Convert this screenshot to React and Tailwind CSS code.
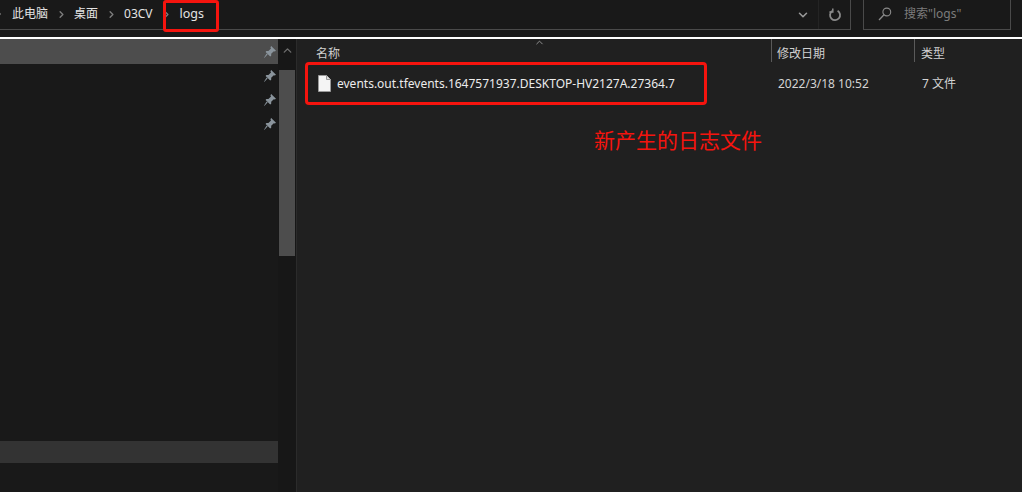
import React from "react";
import { ChevronRight, ChevronDown, ChevronUp } from "lucide-react";

const FONT = { fontFamily: '"Noto Sans","Noto Sans CJK SC",sans-serif' };

function Pin() {
  return (
    <svg width="14" height="14" viewBox="0 0 14 14" className="block">
      <path d="M8.2 1 L13 5.8 L11.8 6.6 L10.8 6.2 L8.2 8.8 L8.2 10.8 L7.2 11.6 L2.6 7 L3.4 6 L5.4 6 L8 3.4 L7.4 2.2 Z" fill="#8a949c" />
      <path d="M4.6 9.6 L1.2 13 L1 12.8 L3.6 8.6 Z" fill="#8a949c" />
    </svg>
  );
}

function FileIcon() {
  return (
    <svg width="13" height="17" viewBox="0 0 13 17" className="block">
      <path d="M0.5 0.5 H8.5 L12.5 4.5 V16.5 H0.5 Z" fill="#f4f4f4" stroke="#9a9a9a" />
      <path d="M8.5 0.5 V4.5 H12.5" fill="#dcdcdc" stroke="#9a9a9a" />
    </svg>
  );
}

function Refresh() {
  return (
    <svg width="14" height="14" viewBox="0 0 14 14" fill="none" stroke="#8a8a8a" strokeWidth="1.8" className="block">
      <path d="M4.2 3 A5 5 0 1 0 9.6 2.8" />
      <path d="M9.8 0.4 V4 H6.4" strokeWidth="1.5" transform="translate(-5 0) scale(1 1)" />
    </svg>
  );
}

function Magnifier() {
  return (
    <svg width="14" height="14" viewBox="0 0 14 14" fill="none" stroke="#8a8a8a" strokeWidth="1.1" className="block">
      <circle cx="8.8" cy="5" r="3.9" />
      <path d="M6 7.8 L1 13" strokeWidth="1.3" />
    </svg>
  );
}

function Crumb({ children }) {
  return <span className="text-[12px] leading-none text-[#e4e4e4] whitespace-nowrap">{children}</span>;
}

function Sep() {
  return <ChevronRight size={11} strokeWidth={3} className="text-[#7d7d7d] mx-[7px] shrink-0" />;
}

export default function App() {
  return (
    <div className="w-[1022px] h-[492px] overflow-hidden flex flex-col bg-[#202020]" style={FONT}>
      {/* top bar */}
      <div className="h-[37px] bg-[#191919] flex items-start shrink-0">
        <div className="w-[851px] h-[30px] border-b border-r border-[#4a4a4a] flex items-center relative">
          <div className="flex items-center flex-1 pb-[1px] -ml-[6px]">
            <ChevronRight size={10} strokeWidth={3} className="text-[#7d7d7d] mr-[8px] shrink-0" />
            <Crumb>此电脑</Crumb>
            <span className="ml-[1px]"><Sep /></span>
            <Crumb>桌面</Crumb>
            <span className="ml-[1px]"><Sep /></span>
            <Crumb>03CV</Crumb>
            <span className="ml-[1px]"><Sep /></span>
            <span className="ml-[1px] text-[12.5px] leading-none text-[#e4e4e4]">logs</span>
          </div>
          <ChevronDown size={14} strokeWidth={2.6} className="text-[#9a9a9a] mr-[8px]" />
          <div className="w-px h-[29px] bg-[#242424]" />
          <div className="ml-[9px] mr-[8px]"><Refresh /></div>
          <div className="absolute left-[163px] top-0 w-[56px] h-[32px] border-[3px] border-[#f5140e] rounded-[3px]" />
        </div>
        <div className="ml-[12px] w-[148px] h-[30px] border-b border-x border-[#4a4a4a] flex items-center pl-[14px] pb-[1px]">
          <Magnifier />
          <span className="ml-[12px] text-[12px] leading-none text-[#7c7c7c]">搜索"logs"</span>
        </div>
      </div>
      <div className="h-[2px] bg-white shrink-0" />

      {/* main */}
      <div className="flex flex-1 min-h-0">
        {/* sidebar */}
        <div className="w-[278px] bg-[#191919] flex flex-col shrink-0">
          <div className="h-[25px] bg-[#4d4d4d] flex items-center justify-end pr-[1px]"><Pin /></div>
          <div className="h-[24px] flex items-center justify-end pr-[1px]"><Pin /></div>
          <div className="h-[24px] flex items-center justify-end pr-[1px]"><Pin /></div>
          <div className="h-[24px] flex items-center justify-end pr-[1px]"><Pin /></div>
          <div className="h-[305px]" />
          <div className="h-[22px] bg-[#333333]" />
        </div>
        {/* scrollbar */}
        <div className="w-[18px] bg-[#171717] shrink-0 flex flex-col items-center">
          <ChevronUp size={13} strokeWidth={2.5} className="text-[#6e6e6e] mt-[5px] mb-[13px]" />
          <div className="w-[16px] h-[186px] bg-[#4d4d4d]" />
        </div>
        <div className="w-px bg-[#2b2b2b] shrink-0" />
        {/* file list */}
        <div className="flex-1 flex flex-col relative">
          <div className="h-[23px] flex text-[12px] leading-[16px] text-[#d0d0d0] relative">
            <div className="w-[475px] pl-[19px] pt-[7px] border-r border-[#5a5a5a]">名称</div>
            <div className="w-[143px] pl-[5px] pt-[7px] border-r border-[#5a5a5a]">修改日期</div>
            <div className="pl-[6px] pt-[7px]">类型</div>
            <ChevronUp size={11} strokeWidth={2} className="absolute left-[237px] -top-[2px] text-[#9a9a9a]" />
          </div>
          <div className="h-[43px] flex items-center">
            <div className="w-[475px] flex items-center pl-[21px]">
              <FileIcon />
              <span className="ml-[6px] text-[12px] leading-[16px] text-[#ececec] whitespace-nowrap">events.out.tfevents.1647571937.DESKTOP-HV2127A.27364.7</span>
            </div>
            <div className="w-[144px] pl-[6px] text-[12px] leading-[16px] text-[#d4d4d4]">2022/3/18 10:52</div>
            <div className="pl-[6px] text-[12px] leading-[16px] text-[#d4d4d4]">7 文件</div>
          </div>
          <div className="absolute left-[8px] top-[23px] w-[402px] h-[43px] border-[3px] border-[#f5140e] rounded-[4px]" />
          <div className="mt-[21px] ml-[297px] text-[21px] leading-[28px] text-[#f5140e]">新产生的日志文件</div>
        </div>
      </div>
    </div>
  );
}
